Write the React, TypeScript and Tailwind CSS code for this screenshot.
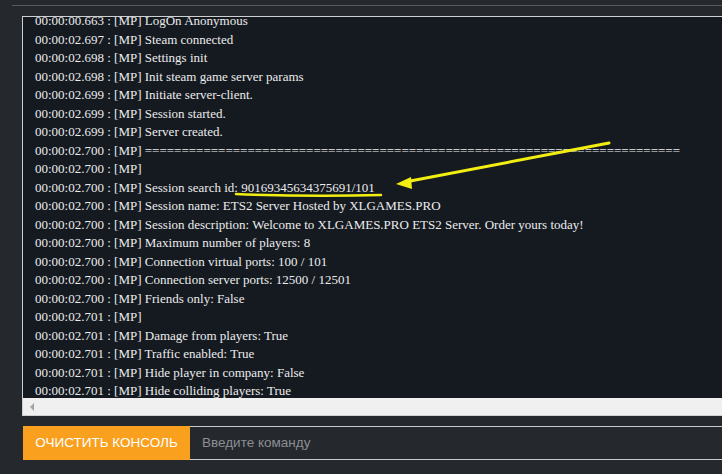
const lines: string[] = [
  '00:00:00.663 : [MP] LogOn Anonymous',
  '00:00:02.697 : [MP] Steam connected',
  '00:00:02.698 : [MP] Settings init',
  '00:00:02.698 : [MP] Init steam game server params',
  '00:00:02.699 : [MP] Initiate server-client.',
  '00:00:02.699 : [MP] Session started.',
  '00:00:02.699 : [MP] Server created.',
  '00:00:02.700 : [MP] ' + '='.repeat(73),
  '00:00:02.700 : [MP]',
  '00:00:02.700 : [MP] Session search id: 90169345634375691/101',
  '00:00:02.700 : [MP] Session name: ETS2 Server Hosted by XLGAMES.PRO',
  '00:00:02.700 : [MP] Session description: Welcome to XLGAMES.PRO ETS2 Server. Order yours today!',
  '00:00:02.700 : [MP] Maximum number of players: 8',
  '00:00:02.700 : [MP] Connection virtual ports: 100 / 101',
  '00:00:02.700 : [MP] Connection server ports: 12500 / 12501',
  '00:00:02.700 : [MP] Friends only: False',
  '00:00:02.701 : [MP]',
  '00:00:02.701 : [MP] Damage from players: True',
  '00:00:02.701 : [MP] Traffic enabled: True',
  '00:00:02.701 : [MP] Hide player in company: False',
  '00:00:02.701 : [MP] Hide colliding players: True',
];

export default function App() {
  return (
    <div className="relative h-[474px] w-[722px] overflow-hidden bg-[#25282d] pt-[5px]">
      <div className="ml-3 h-px bg-[#55585e]" />

      <div className="ml-[22px] mt-[10px] flex h-[400px] flex-col border-l border-t border-b border-[#cfd0d2] bg-[#151a21]">
        <div className="flex-1 overflow-hidden">
          <div className="-mt-[5px] pl-3 font-['Liberation_Serif',serif] text-[13px] leading-[18.5px] whitespace-pre text-[#ececec]">
            {lines.map((line, i) => (
              <div key={i}>{line}</div>
            ))}
          </div>
        </div>
        <div className="flex h-[17px] items-center bg-[#f0f0f0] pl-[7px]">
          <div className="h-0 w-0 border-y-[4px] border-r-[4px] border-y-transparent border-r-[#a3a3a3]" />
        </div>
      </div>

      <div className="ml-[23px] mt-[10px] flex h-[34px]">
        <button className="w-[167px] bg-[#f9a01f] font-['Liberation_Sans',sans-serif] text-[13.5px] font-normal text-white">
          ОЧИСТИТЬ КОНСОЛЬ
        </button>
        <div className="flex flex-1 items-center border-y border-[#c9cacc] pl-3 font-['Liberation_Sans',sans-serif] text-[13.5px] text-[#8b8e93]">
          Введите команду
        </div>
      </div>

      <svg className="pointer-events-none absolute left-0 top-0" width="722" height="474">
        <path d="M236 194 Q310 197 381 195" stroke="#f3ee12" strokeWidth="2.5" fill="none" strokeLinecap="round" />
        <line x1="609" y1="143" x2="405" y2="182" stroke="#f3ee12" strokeWidth="3" strokeLinecap="round" />
        <polygon points="396,184 411,177 412,189" fill="#f3ee12" />
      </svg>
    </div>
  );
}
